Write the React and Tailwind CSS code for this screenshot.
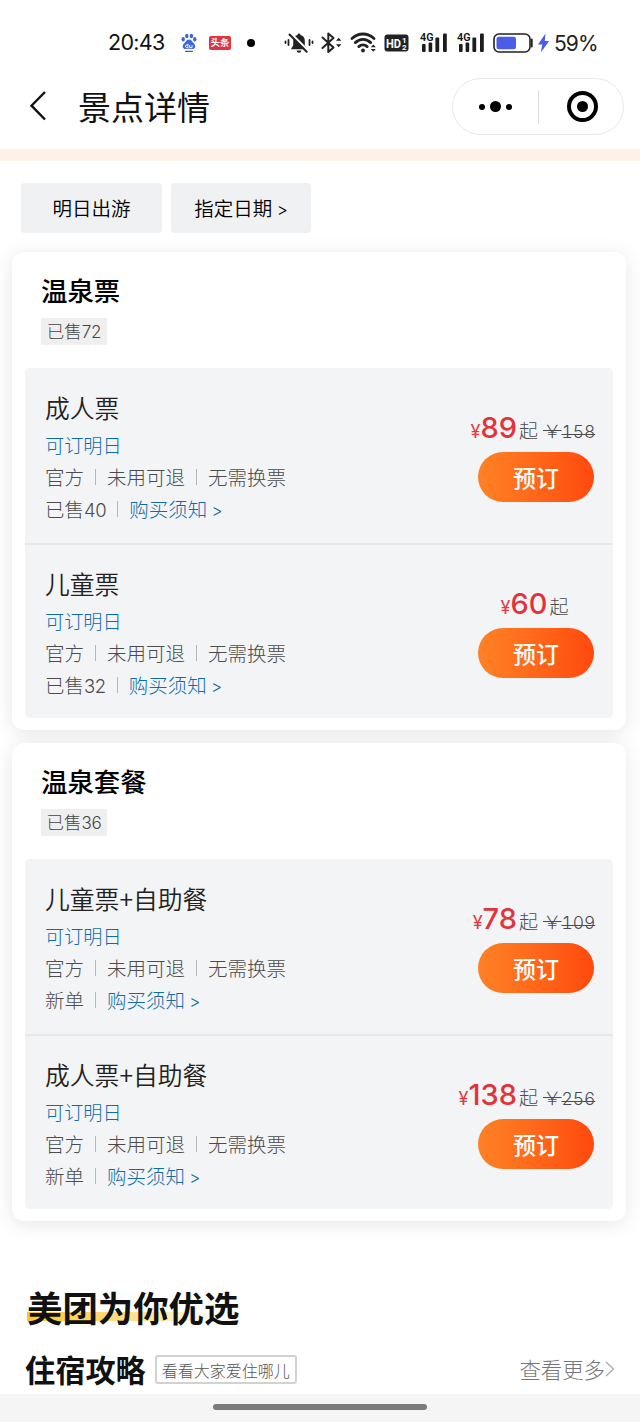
import React from 'react';

const groups = [
  {
    name: '温泉票',
    sold: '72',
    tickets: [
      { name: '成人票', sold: '40', price: '89', original: '158' },
      { name: '儿童票', sold: '32', price: '60' },
    ],
  },
  {
    name: '温泉套餐',
    sold: '36',
    tickets: [
      { name: '儿童票+自助餐', price: '78', original: '109' },
      { name: '成人票+自助餐', price: '138', original: '256' },
    ],
  },
];

function Signal() {
  return (
    <svg className="h-[24px] w-[28px] shrink-0" viewBox="0 0 28 24">
      <text x="0" y="10" fontSize="11.5" fontWeight="600" fontFamily="Roboto, sans-serif" textLength="13.5" lengthAdjust="spacingAndGlyphs" fill="#111">4G</text>
      <g fill="#1c1c1c">
        <rect x="2" y="13" width="3.6" height="8" rx="1" />
        <rect x="8.6" y="11.5" width="3.6" height="9.5" rx="1" />
        <rect x="15.4" y="6.5" width="3.8" height="14.5" rx="1" />
        <rect x="23" y="2.5" width="3.8" height="18.5" rx="1" />
      </g>
    </svg>
  );
}

function StatusBar() {
  return (
    <div className="flex h-[68px] items-center pt-[18px] pl-[108px]">
      <span className="w-[57px] font-['Inter',sans-serif] text-[21.500px] leading-none tracking-[-0.7px] whitespace-nowrap text-[#111]">20:43</span>
      <svg className="ml-[16px] h-[20px] w-[16px] shrink-0" viewBox="0 0 16 20">
        <g fill="#3f67d8">
          <ellipse cx="2.2" cy="6.3" rx="1.7" ry="2.2" />
          <ellipse cx="5.8" cy="3" rx="1.7" ry="2.3" />
          <ellipse cx="10.4" cy="3" rx="1.7" ry="2.3" />
          <ellipse cx="13.8" cy="6.3" rx="1.7" ry="2.2" />
          <path d="M8 6.6c2.4 0 3 2.2 4.7 3.6 3 2.700 1.200 6-1.500 5.800-2-.2-4.400-.2-6.400 0C2 16.200.3 12.900 3.300 10.200 5 8.800 5.600 6.600 8 6.600z" />
        </g>
        <path d="M6.900 10.800v3.700H5.400a1.300 1.300 0 0 1 0-2.500h1.500M8.600 12v2.500h2.500V12" fill="none" stroke="#fff" strokeWidth=".9" />
        <rect x="4" y="17.800" width="8" height="1.200" rx=".6" fill="#555a78" />
      </svg>
      <span className="ml-[12px] flex h-[14px] w-[22px] shrink-0 items-center justify-center rounded-[2px] bg-[#e03440] text-[9.5px] leading-none font-bold whitespace-nowrap text-white">头条</span>
      <span className="ml-[16px] size-[8px] shrink-0 rounded-full bg-black" />
      <svg className="ml-[29px] h-[24px] w-[30px] shrink-0" viewBox="0 0 30 24">
        <path d="M15 2.500a1.500 1.500 0 0 1 1.500 1.400c2.800.7 4.300 3 4.300 5.700v5l2 2.800v.9H7.200v-.9l2-2.800v-5c0-2.700 1.500-5 4.300-5.700A1.500 1.500 0 0 1 15 2.500zM12.700 19.500h4.600a2.300 2.300 0 0 1-4.600 0z" fill="#222" />
        <path d="M6.500 2.200l17.500 17.500" stroke="#fff" strokeWidth="2.500" />
        <path d="M5.500 3.500l17.200 17.200" stroke="#222" strokeWidth="2" strokeLinecap="round" />
        <path d="M4.500 9v5M1.500 10.500v1.500M25.500 9v5M28.500 10.500v1.500" stroke="#222" strokeWidth="1.800" strokeLinecap="round" />
      </svg>
      <svg className="ml-[7px] h-[24px] w-[22px] shrink-0" viewBox="0 0 22 24">
        <path d="M1.500 6.500L12.500 16.500 7.300 21V2.500L12.500 7 1.500 17" fill="none" stroke="#222" strokeWidth="2" strokeLinejoin="round" strokeLinecap="round" />
        <path d="M15 9.800L17.700 6.800 20.400 9.800zM15 13.200L17.700 16.200 20.400 13.200z" fill="#222" />
      </svg>
      <svg className="ml-[7px] h-[24px] w-[28px] shrink-0" viewBox="0 0 28 24">
        <g fill="none" stroke="#222" strokeWidth="2.800" strokeLinecap="round">
          <path d="M2 7.500c6.500-6 15.500-6 22 0" />
          <path d="M5.300 11.600c4.600-4.200 10.800-4.200 15.400 0" />
          <path d="M8.800 15.600c2.500-2.200 5.900-2.200 8.400 0" />
        </g>
        <circle cx="13" cy="19.500" r="1.900" fill="#222" />
        <path d="M20.800 16.200L23.300 13.400 25.800 16.200zM20.800 18L23.300 20.800 25.800 18z" fill="#222" />
      </svg>
      <svg className="ml-[6px] h-[18px] w-[25px] shrink-0" viewBox="0 0 25 18">
        <rect x=".5" y=".5" width="24" height="17" rx="3" fill="#222" />
        <text x="2" y="13.500" fontSize="12.500" fontWeight="700" fontFamily="Roboto, sans-serif" textLength="15" lengthAdjust="spacingAndGlyphs" fill="#fff">HD</text>
        <text x="18" y="8.500" fontSize="8" fontWeight="700" fontFamily="Roboto, sans-serif" fill="#fff">1</text>
        <text x="18" y="15.800" fontSize="8" fontWeight="700" fontFamily="Roboto, sans-serif" fill="#fff">2</text>
      </svg>
      <span className="ml-[11px] flex gap-[9px]"><Signal /><Signal /></span>
      <svg className="ml-[8px] h-[20px] w-[41px] shrink-0" viewBox="0 0 41 20">
        <rect x="1" y="1" width="36" height="18" rx="5" fill="#fff" stroke="#222" strokeWidth="1.600" />
        <rect x="3.500" y="3.700" width="19.500" height="12.600" rx="2.500" fill="#4b5ce6" />
        <path d="M38.800 6.500v7" stroke="#222" strokeWidth="1.800" strokeLinecap="round" />
      </svg>
      <svg className="ml-[3px] h-[20px] w-[13px] shrink-0" viewBox="0 0 13 20">
        <path d="M8.500.5L1 11.500h4.300L3.800 19.500 12.200 8H7.800z" fill="#4b5ce6" />
      </svg>
      <span className="ml-[4px] font-['Inter',sans-serif] text-[21px] leading-none tracking-[-0.9px] text-[#222]">59%</span>
    </div>
  );
}

function Header() {
  return (
    <header className="flex h-[81px] items-center pb-[6px] pl-[28px]">
      <svg className="h-[32px] w-[20px] shrink-0" viewBox="0 0 20 32">
        <path d="M17 2L3.500 15.700 17 29.500" fill="none" stroke="#111" strokeWidth="2.400" />
      </svg>
      <h1 className="ml-[30px] text-[33px] leading-[40px] font-normal text-[#111]">景点详情</h1>
      <div className="mt-[2px] mr-[16px] ml-auto flex h-[57px] w-[172px] items-center rounded-full border border-[#e8e8e8]">
        <span className="flex w-[85px] items-center justify-center gap-[5px] pr-px">
          <span className="size-[6px] rounded-full bg-black" />
          <span className="size-[11px] rounded-full bg-black" />
          <span className="size-[6px] rounded-full bg-black" />
        </span>
        <span className="h-[34px] w-px bg-[#dedede]" />
        <span className="flex w-[84px] items-center justify-center pl-[3px]">
          <span className="flex size-[31px] items-center justify-center rounded-full border-4 border-black">
            <span className="size-[11px] rounded-full bg-black" />
          </span>
        </span>
      </div>
    </header>
  );
}

function Bar() {
  return <span className="mx-[11px] h-[16px] w-px bg-[#b4b6b9]" />;
}

function Ticket({ t }) {
  return (
    <div className="flex h-[175px] justify-between border-[#e6e8ea] pt-[20px] pr-[19px] pl-[20px] last:border-t-2 last:pt-[19px]">
      <div className="text-[19.500px] leading-[32px] font-light whitespace-nowrap text-[#4c4c4c]">
        <h3 className="h-[41px] text-[24.800px] leading-[39px] font-[350] text-[#222]">{t.name}</h3>
        <p className="text-[19.200px] text-[#0f6cab]">可订明日</p>
        <p className="flex h-[32px] items-center">官方<Bar />未用可退<Bar />无需换票</p>
        <p className="flex h-[32px] items-center">
          {t.sold ? <span className="h-[32px]">已售<span className="font-['Inter',sans-serif] text-[18.500px] leading-none tracking-[-0.4px]">{t.sold}</span></span> : '新单'}
          <Bar />
          <span className="h-[32px] text-[#0f6cab]">购买须知 <span className="font-['Inter',sans-serif] text-[17px] leading-none">&gt;</span></span>
        </p>
      </div>
      <div className="flex flex-col items-end pt-[24px]">
        <p className="-mt-px flex h-[41px] min-w-[116px] items-baseline justify-center whitespace-nowrap text-[#4c4c4c]">
          <span className="font-['Inter',sans-serif] text-[18px] leading-[34px] text-[#e23b42]">¥</span>
          <span className="font-['Inter',sans-serif] text-[29px] leading-[34px] font-medium text-[#e2333b]">{t.price}</span>
          <span className="ml-[2px] text-[19px] leading-[34px] font-light">起</span>
          {t.original ? (
            <span className="ml-[5px] w-[51px] text-right text-[18.500px] leading-[34px] font-light line-through">￥<span className="font-['Inter',sans-serif] text-[17.500px] tracking-[-0.1px] tabular-nums">{t.original}</span></span>
          ) : (
            <span className="w-[3px]" />
          )}
        </p>
        <button className="h-[50px] w-[116px] rounded-full bg-linear-to-r from-[#ff8125] to-[#ff480d] text-[23px] leading-[50px] font-medium text-white">预订</button>
      </div>
    </div>
  );
}

function Group({ g }) {
  return (
    <section className="flex h-[478px] flex-col rounded-[12px] bg-white px-[13px] pt-[20px] shadow-[0_3px_20px_rgba(0,0,0,0.1)]">
      <div className="h-[96px] pl-[16px]">
        <h2 className="text-[26.400px] leading-[36px] font-medium text-black">{g.name}</h2>
        <span className="mt-[10px] inline-block h-[27px] w-[66px] bg-[#efefef] text-center text-[17.500px] leading-[26px] font-light text-[#444]">
          已售<span className="font-['Inter',sans-serif] text-[17px] leading-none tracking-[-0.3px]">{g.sold}</span>
        </span>
      </div>
      <div className="h-[350px] overflow-hidden rounded-[5px] bg-[#f3f4f6]">
        {g.tickets.map((t) => <Ticket key={t.name} t={t} />)}
      </div>
    </section>
  );
}

export default function App() {
  return (
    <div className="flex h-[1422px] w-[640px] flex-col overflow-hidden bg-white font-['Noto_Sans_CJK_SC',sans-serif]">
      <StatusBar />
      <Header />
      <div className="h-[12px] bg-[#fef2e8]" />
      <main className="flex flex-1 flex-col">
        <div className="flex gap-[9px] pt-[22px] pl-[21px]">
          <button className="h-[50px] w-[141px] rounded-[4px] bg-[#f0f1f3] text-[19.500px] leading-[50px] font-[350] text-black">明日出游</button>
          <button className="h-[50px] w-[140px] rounded-[4px] bg-[#f0f1f3] text-[19.500px] leading-[50px] font-[350] whitespace-nowrap text-black">指定日期 <span className="font-['Inter',sans-serif] text-[17px]">&gt;</span></button>
        </div>
        <div className="mt-[19px] flex flex-col gap-[13px] pr-[14px] pl-[12px]">
          {groups.map((g) => <Group key={g.name} g={g} />)}
        </div>
        <div className="mt-[60px] h-[55px] pl-[27px]">
          <h2 className="inline-block bg-[linear-gradient(90deg,#fdc52c,#ffe9a8_70%,#ffffff)] bg-[length:190px_9px] bg-[position:0_31px] bg-no-repeat text-[35.400px] leading-[52px] font-bold text-[#111]">美团为你优选</h2>
        </div>
        <div className="mt-[11px] flex items-center pr-[25px] pl-[25px]">
          <h3 className="text-[30.200px] leading-[44px] font-bold text-[#111]">住宿攻略</h3>
          <span className="mt-px ml-[9px] h-[29px] w-[142px] rounded-[3px] border-2 border-[#d2d2d2] text-center text-[16px] leading-[26px] font-light whitespace-nowrap text-[#555]">看看大家爱住哪儿</span>
          <span className="ml-auto text-[21.400px] leading-[44px] font-light text-[#777]">查看更多</span>
          <svg className="h-[18px] w-[10px]" viewBox="0 0 10 18"><path d="M1 2l7.500 7L1 16" fill="none" stroke="#aaa" strokeWidth="1.300" /></svg>
        </div>
      </main>
      <footer className="flex h-[28px] justify-center bg-[#f5f5f5] pt-[10px]">
        <span className="h-[6px] w-[214px] rounded-full bg-[#7b7b7b]" />
      </footer>
    </div>
  );
}
